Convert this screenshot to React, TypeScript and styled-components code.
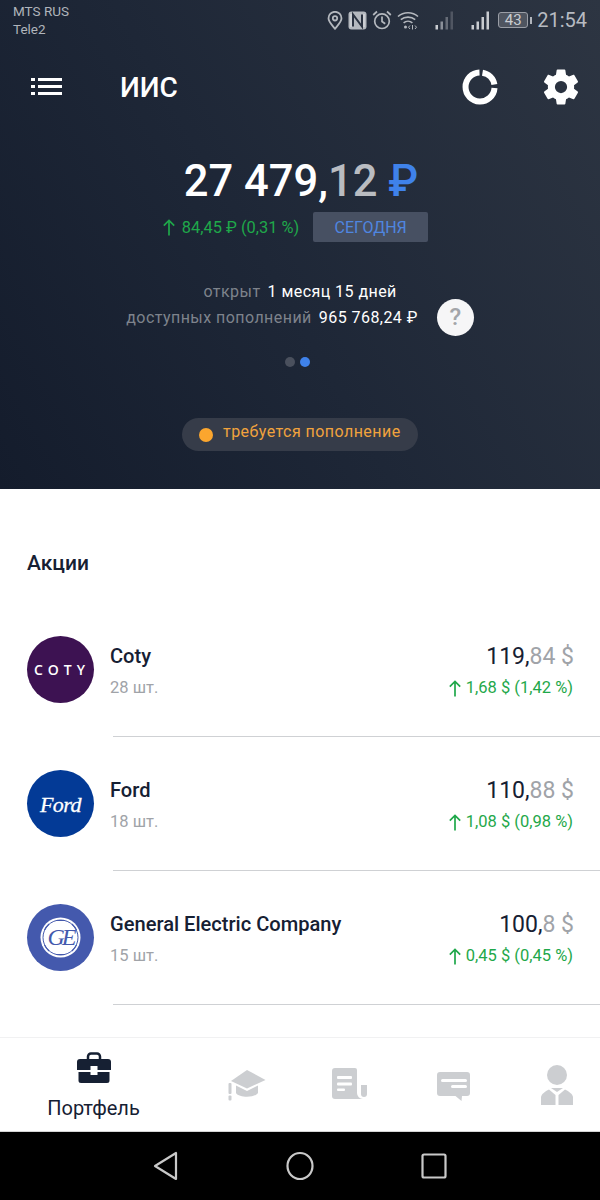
import React from 'react';
import styled, { createGlobalStyle } from 'styled-components';

const GlobalStyle = createGlobalStyle`
  html, body {
    margin: 0;
    padding: 0;
    background: #fff;
    font-family: Roboto, "Liberation Sans", sans-serif;
  }
`;

const stocks = [
  { name: 'Coty', count: '28 шт.', whole: '119,', cents: '84 $', change: '1,68 $ (1,42 %)', logo: 'coty' },
  { name: 'Ford', count: '18 шт.', whole: '110,', cents: '88 $', change: '1,08 $ (0,98 %)', logo: 'ford' },
  { name: 'General Electric Company', count: '15 шт.', whole: '100,', cents: '8 $', change: '0,45 $ (0,45 %)', logo: 'ge' },
];

const LocationIcon = () => (
  <svg width="16" height="19" viewBox="0 0 16 19" fill="none" stroke="#b4b8be" strokeWidth="1.8">
    <path d="M8 17.800C5 13.800 1.500 11 1.500 7.300a6.500 6.500 0 0 1 13 0c0 3.700-3.500 6.500-6.500 10.500z" />
    <circle cx="8" cy="7.300" r="2.200" />
  </svg>
);

const NfcIcon = () => (
  <svg width="19" height="19" viewBox="0 0 19 19">
    <rect x="0.500" y="0.500" width="18" height="18" rx="3" fill="#b4b8be" />
    <path d="M5 15.500V3.500l9 12V3.500" fill="none" stroke="#2a3240" strokeWidth="2" />
    <path d="M3 3v13M16 3v13" stroke="#e2e4e7" strokeWidth="1" />
  </svg>
);

const AlarmIcon = () => (
  <svg width="20" height="20" viewBox="0 0 20 20" fill="none" stroke="#b4b8be" strokeWidth="1.700">
    <circle cx="10" cy="11.200" r="7.300" />
    <path d="M10 6.500v5l3.200 2.300M1.200 5L5 1.500M18.800 5L15 1.500" />
  </svg>
);

const WifiIcon = () => (
  <svg width="22" height="19" viewBox="0 0 22 19" fill="none" stroke="#b4b8be" strokeWidth="1.600">
    <path d="M1 5.500c5.500-5 14.500-5 20 0M3.800 8.700c4-3.500 10.400-3.500 14.400 0M6.600 11.800c2.500-2 6.300-2 8.800 0" />
    <circle cx="8.500" cy="16" r="1.500" fill="#b4b8be" stroke="none" />
    <path d="M13 14.500l-1.500 1.700 1.500 1.800M15.500 14v4.500M18 14.500l1.500 1.700-1.500 1.800" strokeWidth="1" />
  </svg>
);

const SignalIcon = ({ dim }: { dim?: boolean }) => (
  <svg width="20" height="19" viewBox="0 0 20 19">
    <rect x="0.500" y="14" width="2.500" height="4.500" fill="#c9ccd1" />
    <rect x="5.500" y="10.500" width="2.500" height="8" fill={dim ? '#8b9099' : '#c9ccd1'} />
    <rect x="10.500" y="6" width="2.500" height="12.500" fill={dim ? '#666c77' : '#c9ccd1'} />
    <rect x="15.500" y="0.500" width="2.500" height="18" fill={dim ? '#505662' : '#c9ccd1'} />
  </svg>
);

const MenuIcon = () => (
  <svg width="32" height="18" viewBox="0 0 32 18" fill="#fff">
    <rect x="0" y="0" width="4" height="3" />
    <rect x="7" y="0" width="24" height="3" />
    <rect x="0" y="7" width="4" height="3" />
    <rect x="7" y="7" width="24" height="3" />
    <rect x="0" y="14" width="4" height="3" />
    <rect x="7" y="14" width="24" height="3" />
  </svg>
);

const DonutIcon = () => (
  <svg width="36" height="36" viewBox="0 0 36 36" fill="none" stroke="#fff" strokeWidth="6">
    <path d="M17.500 3.500A14.500 14.500 0 1 0 32.500 19" />
    <path d="M20.500 3.700A14.500 14.500 0 0 1 32.400 15.500" />
  </svg>
);

const GearIcon = () => (
  <svg width="42" height="42" viewBox="0 0 24 24" fill="#fff">
    <path d="M19.430 12.980c.04-.32.070-.64.070-.98s-.03-.66-.07-.98l2.110-1.650c.19-.15.240-.42.120-.64l-2-3.460c-.12-.22-.39-.30-.61-.22l-2.490 1c-.52-.40-1.080-.73-1.690-.98l-.38-2.650A.488.488 0 0 0 14 2h-4c-.25 0-.46.180-.49.420l-.38 2.650c-.61.25-1.170.59-1.690.98l-2.490-1c-.23-.09-.49 0-.61.220l-2 3.460c-.13.220-.07.490.12.640l2.110 1.650c-.04.320-.07.650-.07.980s.03.660.07.980l-2.110 1.650c-.19.150-.24.420-.12.640l2 3.460c.12.220.39.300.61.220l2.490-1c.52.400 1.080.730 1.690.980l.38 2.650c.03.240.24.420.49.420h4c.25 0 .46-.180.49-.420l.38-2.650c.61-.250 1.170-.590 1.690-.980l2.490 1c.23.090.49 0 .61-.220l2-3.460c.12-.220.07-.490-.12-.640l-2.110-1.650zM12 15.500A3.500 3.500 0 1 1 12 8.500a3.500 3.500 0 0 1 0 7z" />
  </svg>
);

const UpArrow = () => (
  <svg width="12" height="17" viewBox="0 0 12 17" fill="none" stroke="#1fa84a" strokeWidth="1.700">
    <path d="M6 16.500V1.500M0.800 6.700L6 1.500l5.200 5.200" />
  </svg>
);

const BriefcaseIcon = () => (
  <svg width="34" height="32" viewBox="0 0 34 32">
    <path fill="none" stroke="#162033" strokeWidth="2.500" d="M11 8V4.500a3 3 0 0 1 3-3h6a3 3 0 0 1 3 3V8" />
    <path fill="#162033" d="M3 7h28a3 3 0 0 1 3 3v8H0v-8a3 3 0 0 1 3-3z" />
    <path fill="#162033" d="M1.500 20h31v8.500a2.500 2.500 0 0 1-2.500 2.500H4a2.500 2.500 0 0 1-2.500-2.500z" />
    <rect x="13.500" y="14" width="7" height="9" fill="#fff" />
  </svg>
);

const CapIcon = () => (
  <svg width="38" height="31" viewBox="0 0 38 31" fill="#ccced1">
    <path d="M19 0l18.500 10L19 18.500 3 11z" />
    <path d="M8 15.500l11 5.500 11-5.500V23c-3 5-19 5-22 0z" />
    <rect x="0.500" y="13" width="3" height="11" rx="1" />
    <rect x="0.500" y="25.500" width="3" height="5" rx="1" />
  </svg>
);

const NewsIcon = () => (
  <svg width="35" height="32" viewBox="0 0 35 32">
    <path fill="#ccced1" d="M3 0h20a2 2 0 0 1 2 2v23a6 6 0 0 0 6 6H3a3 3 0 0 1-3-3V3a3 3 0 0 1 3-3z" />
    <path fill="#ccced1" d="M29 17h6v9a3 3 0 0 1-6 0z" />
    <rect x="5" y="8" width="15" height="3" fill="#fff" rx="1" />
    <rect x="5" y="14.500" width="15" height="3" fill="#fff" rx="1" />
    <rect x="5" y="20.500" width="8" height="2.500" fill="#fff" rx="1" />
  </svg>
);

const ChatIcon = () => (
  <svg width="33" height="29" viewBox="0 0 33 29">
    <path fill="#ccced1" d="M3 0h27a3 3 0 0 1 3 3v18a3 3 0 0 1-3 3h-5l-.5 5-6-5H3a3 3 0 0 1-3-3V3a3 3 0 0 1 3-3z" />
    <rect x="4" y="7" width="26" height="3" fill="#fff" rx="1.500" />
    <rect x="14" y="13" width="16" height="3" fill="#fff" rx="1.500" />
  </svg>
);

const PersonIcon = () => (
  <svg width="32" height="40" viewBox="0 0 32 40" fill="#ccced1">
    <circle cx="16" cy="10" r="10" />
    <path d="M10 23h12l-6 4z" />
    <path d="M0 40v-8c.500-3 4-5.500 8-7.500l6.500 5.500v10z" />
    <path d="M32 40v-8c-.500-3-4-5.500-8-7.500L17.500 30v10z" />
  </svg>
);

const GeMark = () => (
  <svg width="41" height="41" viewBox="0 0 41 41">
    <circle cx="20.500" cy="20.500" r="20" fill="#fff" />
    <circle cx="20.500" cy="20.500" r="17.500" fill="none" stroke="#4459ad" strokeWidth="1" />
    <path
      d="M9 7c-2 2-3.500 4-4.500 6M32 7c2 2 3.500 4 4.500 6M4.500 28c1 2 2.500 4 4.500 6M36.500 28c-1 2-2.500 4-4.500 6M16 3.500h9M16 37.500h9"
      fill="none"
      stroke="#4459ad"
      strokeWidth="1.200"
    />
    <text x="20.500" y="28" textAnchor="middle" fill="#4459ad" fontFamily="Liberation Serif, serif" fontStyle="italic" fontSize="24" letterSpacing="-3">
      GE
    </text>
  </svg>
);

const StockLogo = ({ kind }: { kind: string }) => {
  if (kind === 'coty') {
    return (
      <LogoCircle $bg="#3d1252">
        <CotyText>COTY</CotyText>
      </LogoCircle>
    );
  }
  if (kind === 'ford') {
    return (
      <LogoCircle $bg="#033a96">
        <FordText>Ford</FordText>
      </LogoCircle>
    );
  }
  return (
    <LogoCircle $bg="#4459ad">
      <GeMark />
    </LogoCircle>
  );
};

const App = () => {
  return (
    <Screen>
      <GlobalStyle />
      <Hero>
        <StatusBar>
          <Carriers>
            <span>MTS RUS</span>
            <span>Tele2</span>
          </Carriers>
          <StatusIcons>
            <LocationIcon />
            <NfcIcon />
            <AlarmIcon />
            <WifiIcon />
            <SignalSlot>
              <SignalIcon dim />
            </SignalSlot>
            <SignalSlot>
              <SignalIcon />
            </SignalSlot>
            <Battery>
              <BatteryBody>43</BatteryBody>
              <BatteryTip />
            </Battery>
            <Clock>21:54</Clock>
          </StatusIcons>
        </StatusBar>
        <Toolbar>
          <MenuSlot>
            <MenuIcon />
          </MenuSlot>
          <Title>ИИС</Title>
          <ToolbarActions>
            <DonutIcon />
            <GearIcon />
          </ToolbarActions>
        </Toolbar>
        <Balance>
          27 479,<BalanceCents>12</BalanceCents> <BalanceCurrency>₽</BalanceCurrency>
        </Balance>
        <ChangeRow>
          <ChangeText>
            <UpArrow />
            84,45 ₽ (0,31 %)
          </ChangeText>
          <PeriodButton>СЕГОДНЯ</PeriodButton>
        </ChangeRow>
        <InfoBlock>
          <InfoRows>
            <InfoRow>
              <InfoLabel>открыт</InfoLabel>
              <InfoValue>1 месяц 15 дней</InfoValue>
            </InfoRow>
            <InfoRow>
              <InfoLabel>доступных пополнений</InfoLabel>
              <InfoValue>965 768,24 ₽</InfoValue>
            </InfoRow>
          </InfoRows>
          <HelpButton>?</HelpButton>
        </InfoBlock>
        <Dots>
          <Dot />
          <Dot $active />
        </Dots>
        <WarningPill>
          <WarningDot />
          <WarningText>требуется пополнение</WarningText>
        </WarningPill>
      </Hero>
      <Content>
        <SectionTitle>Акции</SectionTitle>
        {stocks.map((s) => (
          <StockRow key={s.name}>
            <StockLogo kind={s.logo} />
            <StockBody>
              <StockMain>
                <StockInfo>
                  <StockName>{s.name}</StockName>
                  <StockCount>{s.count}</StockCount>
                </StockInfo>
                <StockPrices>
                  <StockPrice>
                    {s.whole}
                    <PriceCents>{s.cents}</PriceCents>
                  </StockPrice>
                  <StockChange>
                    <UpArrow />
                    {s.change}
                  </StockChange>
                </StockPrices>
              </StockMain>
            </StockBody>
          </StockRow>
        ))}
      </Content>
      <BottomNav>
        <NavItem>
          <BriefcaseIcon />
          <NavLabel>Портфель</NavLabel>
        </NavItem>
        <NavIconItem $w={119} $top={32}>
          <CapIcon />
        </NavIconItem>
        <NavIconItem $w={87} $top={30}>
          <NewsIcon />
        </NavIconItem>
        <NavIconItem $w={120} $top={34}>
          <ChatIcon />
        </NavIconItem>
        <NavIconItem $w={87} $top={27}>
          <PersonIcon />
        </NavIconItem>
      </BottomNav>
      <AndroidBar>
        <svg width="26" height="30" viewBox="0 0 26 30" fill="none" stroke="#c9c9c9" strokeWidth="2.200" strokeLinejoin="round">
          <path d="M23 2v26L2 15z" />
        </svg>
        <svg width="28" height="30" viewBox="0 0 28 30" fill="none" stroke="#c9c9c9" strokeWidth="2.200">
          <ellipse cx="14" cy="15" rx="12.500" ry="13" />
        </svg>
        <svg width="26" height="26" viewBox="0 0 26 26" fill="none" stroke="#c9c9c9" strokeWidth="2.200">
          <rect x="1.500" y="1.500" width="23" height="23" rx="1.500" />
        </svg>
      </AndroidBar>
    </Screen>
  );
};

export default App;

const Screen = styled.div`
  width: 600px;
  height: 1200px;
  display: flex;
  flex-direction: column;
  overflow: hidden;
  background: #fff;
`;

const Hero = styled.header`
  height: 489px;
  flex: none;
  display: flex;
  flex-direction: column;
  align-items: center;
  background: linear-gradient(60deg, #141c2c 0%, #1e2737 45%, #2d3542 100%);
`;

const StatusBar = styled.div`
  align-self: stretch;
  height: 40px;
  display: flex;
  justify-content: space-between;
  padding: 2px 13px 0;
  color: #b0b4bb;
`;

const Carriers = styled.div`
  display: flex;
  flex-direction: column;
  font-size: 13.500px;
  line-height: 18px;
`;

const StatusIcons = styled.div`
  display: flex;
  align-items: center;
  height: 36px;
  gap: 5px;
`;

const SignalSlot = styled.div`
  display: flex;
  margin-left: 11px;
`;

const Battery = styled.div`
  display: flex;
  align-items: center;
  gap: 2px;
  margin-left: 2px;
`;

const BatteryBody = styled.div`
  width: 30px;
  height: 16px;
  box-sizing: border-box;
  border: 1.500px solid #9a9ea6;
  border-radius: 3px;
  background: #4f5560;
  color: #c9ccd1;
  font-size: 15px;
  line-height: 14px;
  text-align: center;
`;

const BatteryTip = styled.div`
  width: 2px;
  height: 7px;
  background: #b0b4bb;
`;

const Clock = styled.span`
  font-size: 20px;
  color: #b7bbc1;
`;

const Toolbar = styled.div`
  align-self: stretch;
  height: 92px;
  box-sizing: border-box;
  display: flex;
  align-items: center;
  padding: 0 18px 2px 31px;
`;

const MenuSlot = styled.div`
  width: 89px;
  display: flex;
`;

const Title = styled.h1`
  margin: 0;
  flex: 1;
  color: #fff;
  font-size: 28px;
  font-weight: 500;
`;

const ToolbarActions = styled.div`
  display: flex;
  align-items: center;
  gap: 42px;
`;

const Balance = styled.div`
  margin: 22px 0 0 2px;
  font-size: 43.500px;
  line-height: 52px;
  font-weight: 500;
  color: #fff;
  white-space: pre;
`;

const BalanceCents = styled.span`
  color: #b9bcc1;
`;

const BalanceCurrency = styled.span`
  color: #3f82ea;
`;

const ChangeRow = styled.div`
  margin: 4px 9px 0 0;
  display: flex;
  align-items: center;
  gap: 14px;
`;

const ChangeText = styled.div`
  display: flex;
  align-items: center;
  gap: 7px;
  font-size: 16.400px;
  color: #1fa84a;
`;

const PeriodButton = styled.div`
  width: 115px;
  height: 30px;
  border-radius: 2px;
  background: #475062;
  color: #4f86e0;
  font-size: 16px;
  line-height: 32px;
  text-align: center;
`;

const InfoBlock = styled.div`
  margin-top: 37px;
  display: flex;
  gap: 19px;
`;

const InfoRows = styled.div`
  display: flex;
  flex-direction: column;
  align-items: flex-end;
`;

const InfoRow = styled.div`
  display: flex;
  gap: 7px;
  font-size: 16px;
  line-height: 26px;
  letter-spacing: 0.450px;
  &:first-child {
    margin-right: 21px;
  }
`;

const InfoLabel = styled.span`
  color: #7e838c;
`;

const InfoValue = styled.span`
  color: #fff;
`;

const HelpButton = styled.div`
  align-self: flex-end;
  width: 37px;
  height: 37px;
  margin-bottom: -5px;
  border-radius: 50%;
  background: #f6f6f7;
  color: #a3a5a9;
  font-size: 24px;
  font-weight: 500;
  line-height: 37px;
  text-align: center;
`;

const Dots = styled.div`
  margin: 26px 5px 0 0;
  display: flex;
  gap: 5px;
`;

const Dot = styled.div<{ $active?: boolean }>`
  width: 10px;
  height: 10px;
  border-radius: 50%;
  background: ${(p) => (p.$active ? '#3f82ea' : '#4a505d')};
`;

const WarningPill = styled.div`
  margin-top: 51px;
  width: 236px;
  height: 33px;
  box-sizing: border-box;
  padding-left: 17px;
  display: flex;
  align-items: center;
  gap: 10px;
  border-radius: 17px;
  background: #363c49;
`;

const WarningDot = styled.div`
  width: 14px;
  height: 14px;
  margin-top: 1px;
  border-radius: 50%;
  background: #fba62e;
`;

const WarningText = styled.span`
  color: #f1a33d;
  font-size: 16px;
  letter-spacing: 0.450px;
  margin-bottom: 7px;
`;

const Content = styled.main`
  flex: 1;
  min-height: 0;
  overflow: hidden;
  padding: 61px 0 0 27px;
  box-sizing: border-box;
`;

const SectionTitle = styled.h2`
  margin: 0 0 60px;
  color: #162033;
  font-size: 21px;
  line-height: 26px;
  font-weight: 500;
`;

const StockRow = styled.div`
  height: 134px;
  display: flex;
  gap: 19px;
`;

const LogoCircle = styled.div<{ $bg: string }>`
  width: 67px;
  height: 67px;
  flex: none;
  border-radius: 50%;
  background: ${(p) => p.$bg};
  display: flex;
  align-items: center;
  justify-content: center;
  overflow: hidden;
`;

const CotyText = styled.span`
  color: #fff;
  font-family: "Open Sans", sans-serif;
  font-size: 14px;
  font-weight: 600;
  letter-spacing: 5px;
  margin-right: -3px;
`;

const FordText = styled.span`
  color: #fff;
  font-family: "Liberation Serif", serif;
  font-style: italic;
  font-size: 22px;
  letter-spacing: -0.500px;
  margin-top: 3px;
  -webkit-text-stroke: 0.300px #fff;
`;

const StockBody = styled.div`
  flex: 1;
  height: 100px;
  border-bottom: 1px solid #cfd1d4;
`;

const StockMain = styled.div`
  margin-left: -3px;
  display: flex;
  justify-content: space-between;
  padding-right: 27px;
`;

const StockInfo = styled.div`
  display: flex;
  flex-direction: column;
`;

const StockName = styled.div`
  color: #162033;
  font-size: 20.100px;
  line-height: 26px;
  font-weight: 500;
  margin-top: 7px;
`;

const StockCount = styled.div`
  color: #a0a3a8;
  font-size: 16.500px;
  line-height: 20px;
  margin-top: 9px;
`;

const StockPrices = styled.div`
  display: flex;
  flex-direction: column;
  align-items: flex-end;
`;

const StockPrice = styled.div`
  color: #162033;
  font-size: 23px;
  line-height: 28px;
  margin: 7px -1px 0 0;
`;

const PriceCents = styled.span`
  color: #a0a3a8;
`;

const StockChange = styled.div`
  display: flex;
  align-items: center;
  gap: 5px;
  color: #1fa84a;
  font-size: 16.500px;
  line-height: 20px;
  margin-top: 7px;
`;

const BottomNav = styled.nav`
  height: 95px;
  flex: none;
  box-sizing: border-box;
  border-top: 1px solid #f1f1f2;
  border-bottom: 1px solid #d4d4d4;
  display: flex;
  background: #fff;
`;

const NavItem = styled.div`
  width: 187px;
  display: flex;
  flex-direction: column;
  align-items: center;
  padding-top: 14px;
`;

const NavIconItem = styled.div<{ $w: number; $top: number }>`
  width: ${(p) => p.$w}px;
  display: flex;
  justify-content: center;
  align-items: flex-start;
  padding-top: ${(p) => p.$top}px;
`;

const NavLabel = styled.span`
  margin-top: 12px;
  color: #162033;
  font-size: 20px;
  line-height: 24px;
`;

const AndroidBar = styled.div`
  height: 68px;
  flex: none;
  background: #000;
  display: flex;
  align-items: center;
  justify-content: center;
  gap: 107px;
`;
